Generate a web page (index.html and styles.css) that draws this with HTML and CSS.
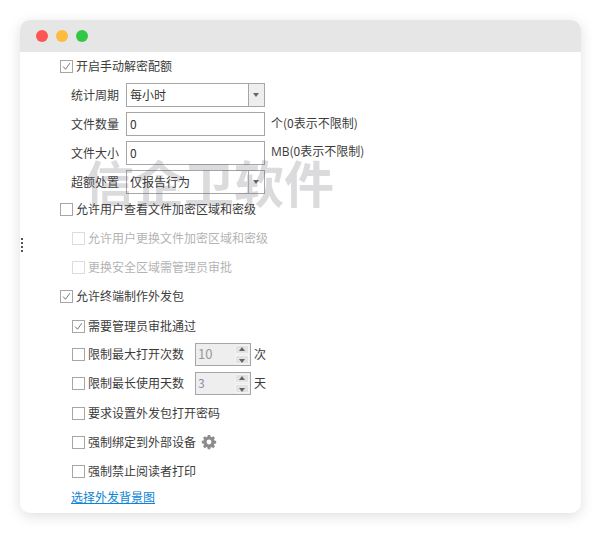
FILE: index.html
```html
<!DOCTYPE html>
<html lang="zh">
<head>
<meta charset="utf-8">
<title>开启手动解密配额</title>
<link rel="stylesheet" href="styles.css">
</head>
<body>
<div class="handle"><i></i><i></i><i></i><i></i></div>
<main class="window">
  <header class="titlebar">
    <span class="dot red"></span><span class="dot yellow"></span><span class="dot green"></span>
  </header>
  <div class="content">
    <div class="watermark">信企卫软件</div>
    <div class="check-row top"><span class="box on"><svg viewBox="0 0 13 13"><path d="M2.500 6.500 5.300 9.800 10.500 2.500"/></svg></span>开启手动解密配额</div>
    <div class="form">
      <div class="form-row"><label>统计周期</label><div class="field select"><span>每小时</span><b class="arrow"></b></div></div>
      <div class="form-row"><label>文件数量</label><div class="field"><span>0</span></div><span class="hint">个(0表示不限制)</span></div>
      <div class="form-row"><label>文件大小</label><div class="field"><span>0</span></div><span class="hint"><span class="latin">MB</span>(0表示不限制)</span></div>
      <div class="form-row"><label>超额处置</label><div class="field select clear"><span>仅报告行为</span><b class="arrow"></b></div></div>
    </div>
    <div class="check-row l1 r1"><span class="box"></span>允许用户查看文件加密区域和密级</div>
    <div class="check-row l2 off r2"><span class="box"></span>允许用户更换文件加密区域和密级</div>
    <div class="check-row l2 off r2"><span class="box"></span>更换安全区域需管理员审批</div>
    <div class="check-row l1 r2"><span class="box on"><svg viewBox="0 0 13 13"><path d="M2.500 6.500 5.300 9.800 10.500 2.500"/></svg></span>允许终端制作外发包</div>
    <div class="check-row l2 r3"><span class="box on"><svg viewBox="0 0 13 13"><path d="M2.500 6.500 5.300 9.800 10.500 2.500"/></svg></span>需要管理员审批通过</div>
    <div class="check-row l2 r4"><span class="box"></span>限制最大打开次数<div class="spin"><span>10</span><div class="btns"><b class="up"></b><b class="down"></b></div></div><span class="unit">次</span></div>
    <div class="check-row l2 r2"><span class="box"></span>限制最长使用天数<div class="spin"><span class="blue">3</span><div class="btns"><b class="up"></b><b class="down"></b></div></div><span class="unit">天</span></div>
    <div class="check-row l2 r3"><span class="box"></span>要求设置外发包打开密码</div>
    <div class="check-row l2 r2"><span class="box"></span>强制绑定到外部设备<svg class="gear" viewBox="0 0 16 16"><path fill-rule="evenodd" d="M6.600 0h2.800l.4 2.100 1.200.5L12.800 1.400l2 2-1.200 1.800.5 1.200 2.100.4v2.800l-2.100.4-.5 1.200 1.200 1.800-2 2-1.800-1.200-1.200.5-.4 2.100H6.600l-.4-2.100-1.200-.5-1.800 1.200-2-2 1.200-1.800-.5-1.200L-.2 9.400V6.600l2.100-.4.5-1.200L1.200 3.400l2-2L5 2.600l1.200-.5zM8 5.200a2.800 2.800 0 1 0 0 5.600 2.800 2.800 0 0 0 0-5.600z"/></svg></div>
    <div class="check-row l2 r2"><span class="box"></span>强制禁止阅读者打印</div>
    <a class="link" href="#">选择外发背景图</a>
  </div>
</main>
</body>
</html>
```
FILE: styles.css
```css
* { box-sizing: border-box; }
html, body { margin: 0; height: 100%; }
body {
  width: 601px; height: 533px; padding: 20px; background: #fff; overflow: hidden; position: relative;
  font: 12px/16px "Noto Sans CJK SC", "Liberation Sans", sans-serif; color: #3c3c3c;
}
.latin { font-family: "Open Sans", sans-serif; }
.window {
  width: 561px; height: 493px; background: #fff; border-radius: 10px; overflow: hidden;
  box-shadow: 0 3px 14px rgba(0,0,0,.13);
}
.titlebar { height: 32px; background: #e6e6e6; display: flex; align-items: center; gap: 8px; padding: 0 16px; }
.dot { width: 12px; height: 12px; border-radius: 50%; }
.red { background: #fc5753; } .yellow { background: #fdbc40; } .green { background: #33c748; }
.content { position: relative; padding: 6px 0 0 40px; }
.watermark {
  position: absolute; left: 64px; top: 94px; font-size: 50px; line-height: 70px; font-weight: 700;
  color: rgba(110,112,120,.25); white-space: nowrap; pointer-events: none;
}
.check-row { display: flex; align-items: center; height: 16px; white-space: nowrap; }
.box {
  width: 13px; height: 13px; border: 1px solid #a6a6a6; background: #fff; margin-right: 3px; flex: none; display: flex;
}
.box svg { width: 11px; height: 11px; fill: none; stroke: #707070; stroke-width: 1.1; }
.l1 { margin-left: 0; }
.l2 { margin-left: 12px; }
.off { color: #b4b4b4; }
.off .box { border-color: #dcdcdc; }
.r1 { margin-top: 7px; }
.r2 { margin-top: 13px; }
.r3 { margin-top: 14px; }
.r4 { margin-top: 12px; }
.form { margin: 9px 0 0 11px; display: flex; flex-direction: column; gap: 5px; }
.form-row { display: flex; align-items: center; height: 24px; }
.form-row label { width: 48px; margin-right: 7px; flex: none; }
.field {
  width: 139px; height: 24px; border: 1px solid #a6a6a6; background: #fff; display: flex; align-items: center; padding-left: 3px; color: #333; flex: none;
}
.field > span { flex: 1; }
.clear { background: transparent; }
.select .arrow {
  width: 16px; height: 22px; background: #eee; border-left: 1px solid #a6a6a6; position: relative; flex: none;
}
.clear .arrow { background: transparent; }
.arrow::after {
  content: ""; position: absolute; left: 4px; top: 9px; border: 3px solid transparent; border-top: 4px solid #666; border-bottom: 0;
}
.hint { margin-left: 6px; margin-top: -3px; }
.spin {
  width: 56px; height: 23px; margin-left: 11px; border: 1px solid #a6a6a6; background: #eee; display: flex; color: #999; padding: 1px 1px 1px 2px; font-size: 13px;
}
.spin > span { flex: 1; line-height: 18px; }
.spin .blue { color: #7f8fb0; font-size: 12px; }
.btns { width: 14px; display: flex; flex-direction: column; gap: 1px; }
.btns b { flex: 1; background: #e2e2e2; border: 1px solid #f4f4f4; position: relative; }
.up::after, .down::after { content: ""; position: absolute; left: 3px; border: 3px solid transparent; }
.up::after { top: 1px; border-bottom: 4px solid #666; border-top: 0; }
.down::after { top: 3px; border-top: 4px solid #666; border-bottom: 0; }
.unit { margin-left: 3px; }
.gear { width: 14px; height: 14px; margin-left: 6px; fill: #8c8c8c; overflow: visible; }
.link { display: block; margin-top: 10px; margin-left: 11px; color: #0a84d6; text-decoration: underline; width: max-content; }
.handle { position: absolute; left: 21px; top: 238px; display: flex; flex-direction: column; gap: 2px; }
.handle i { width: 2px; height: 2px; background: #555; }
```
